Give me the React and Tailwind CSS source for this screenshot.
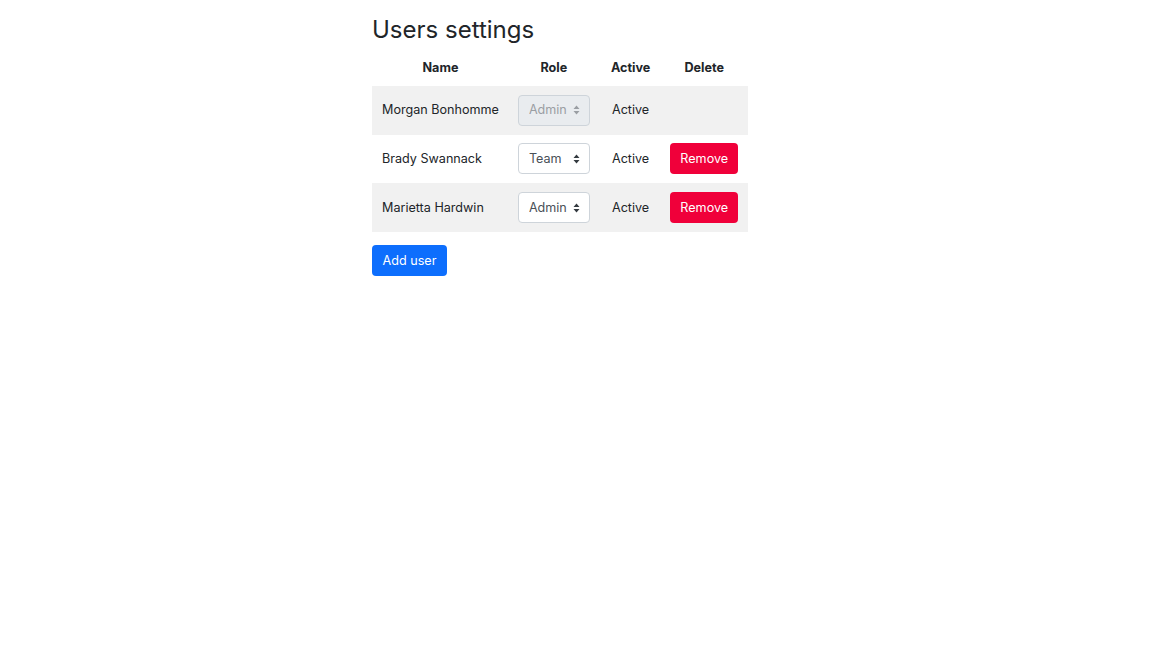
import { useState } from 'react';

const initialUsers = [
    { id: 1, name: 'Morgan Bonhomme', role: 'Admin', active: true, locked: true },
    { id: 2, name: 'Brady Swannack', role: 'Team', active: true, locked: false },
    { id: 3, name: 'Marietta Hardwin', role: 'Admin', active: true, locked: false },
];

function RoleSelect({ value, disabled, onChange }) {
    return (
        <div className="relative w-[72px]">
            <select
                value={value}
                disabled={disabled}
                onChange={e => onChange(e.target.value)}
                className={`appearance-none w-full h-[31px] rounded border border-[#ced4da] pl-[10px] pr-5 pt-px text-[12.6px] outline-none ${disabled ? 'bg-[#e9ecef] text-[#9a9ea3]' : 'bg-white text-[#495057]'}`}
            >
                <option>Admin</option>
                <option>Team</option>
            </select>
            <svg className="absolute right-[10px] top-1/2 -translate-y-1/2 pointer-events-none" width="7" height="10" viewBox="0 0 7 10">
                <path d="M3.5 0.5 L6.5 4 H0.5 Z M3.5 9.5 L6.5 6 H0.5 Z" fill={disabled ? '#9a9ea3' : '#343a40'} />
            </svg>
        </div>
    );
}

export default function App() {
    const [users, setUsers] = useState(initialUsers);

    const setRole = (id, role) => setUsers(users.map(u => (u.id === id ? { ...u, role } : u)));
    const removeUser = id => setUsers(users.filter(u => u.id !== id));
    const addUser = () => setUsers([...users, { id: Date.now(), name: 'New user', role: 'Team', active: true, locked: false }]);

    return (
        <div className="min-h-screen bg-white text-[#212529] font-['Inter',sans-serif]">
            <div className="mx-auto w-[407px] pt-[15px]">
                <h1 className="text-[24px] leading-[30px] font-normal mb-[6px]">Users settings</h1>

                <table className="text-[12.6px] border-collapse">
                    <thead>
                        <tr>
                            <th className="pl-[10px] pr-[9px] h-[35px] font-bold text-center">Name</th>
                            <th className="px-[10px] h-[35px] font-bold text-center">Role</th>
                            <th className="pl-[11px] pr-[10px] h-[35px] font-bold text-center">Active</th>
                            <th className="px-[10px] h-[35px] font-bold text-center">Delete</th>
                        </tr>
                    </thead>
                    <tbody>
                        {users.map((u, i) => (
                            <tr key={u.id} className={i % 2 === 0 ? 'bg-[#f1f1f1]' : 'bg-white'}>
                                <td className="pl-[10px] pr-[9px] pt-px h-[48.67px] text-left">{u.name}</td>
                                <td className="px-[10px] h-[48.67px]">
                                    <RoleSelect value={u.role} disabled={u.locked} onChange={r => setRole(u.id, r)} />
                                </td>
                                <td className="pl-[11px] pr-[10px] pt-px h-[48.67px] text-center">{u.active ? 'Active' : 'Inactive'}</td>
                                <td className="px-[10px] h-[48.67px] text-center">
                                    {!u.locked && (
                                        <button
                                            onClick={() => removeUser(u.id)}
                                            className="h-[31px] w-[68px] pt-px rounded bg-[#f0003a] text-white text-[12.6px]"
                                        >
                                            Remove
                                        </button>
                                    )}
                                </td>
                            </tr>
                        ))}
                    </tbody>
                </table>

                <button
                    onClick={addUser}
                    className="mt-[13px] h-[31px] w-[75px] pt-px rounded bg-[#0d6efd] text-white text-[12.6px]"
                >
                    Add user
                </button>
            </div>
        </div>
    );
}
